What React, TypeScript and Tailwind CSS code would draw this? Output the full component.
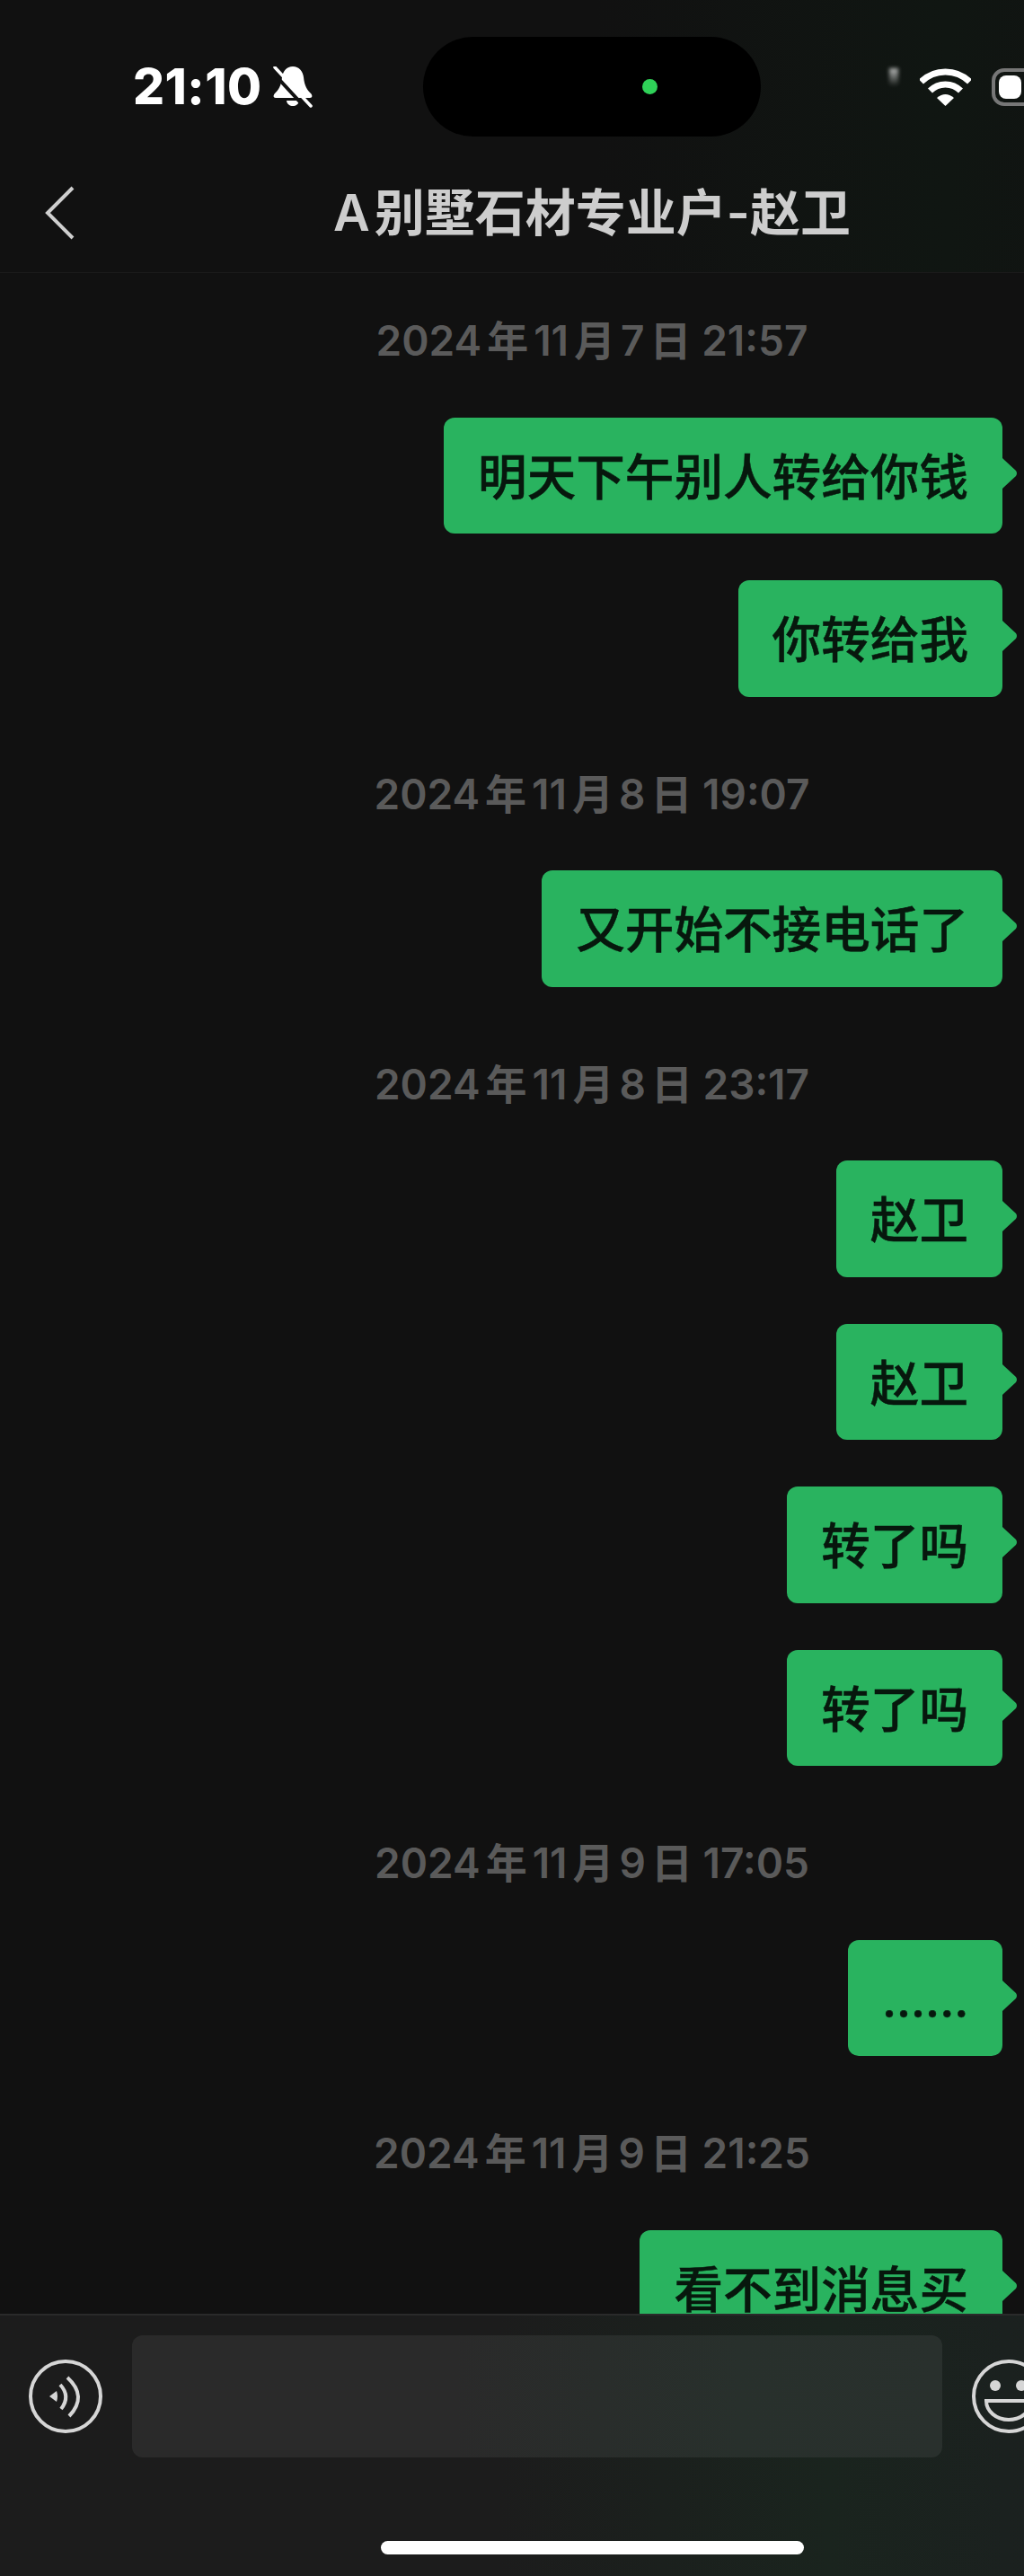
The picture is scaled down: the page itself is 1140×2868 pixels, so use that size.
const groups = [
  { date: ['2024', '11', '7', '21:57'], messages: ['明天下午别人转给你钱', '你转给我'] },
  { date: ['2024', '11', '8', '19:07'], messages: ['又开始不接电话了'] },
  { date: ['2024', '11', '8', '23:17'], messages: ['赵卫', '赵卫', '转了吗', '转了吗'] },
  { date: ['2024', '11', '9', '17:05'], messages: ['......'] },
  { date: ['2024', '11', '9', '21:25'], messages: ['看不到消息买'] },
];

function Bubble({ text }: { text: string }) {
  return (
    <div className="relative flex h-[129.5px] shrink-0 items-center rounded-[12px] bg-[#29b35f] px-[38px] pt-[4px] text-[54.6px] font-medium text-[#07170d] [-webkit-text-stroke:0.5px_#07170d]">
      <span className={`whitespace-nowrap leading-none ${text === '......' ? 'tracking-[-0.5px]' : ''}`}>{text}</span>
      <svg className="absolute left-full top-[45px] h-[34px] w-[17px]" viewBox="0 0 17 34" aria-hidden="true">
        <path d="M0 0 L2 2 L15 14 Q17 17 15 20 L2 32 L0 34 Z" fill="#29b35f" />
      </svg>
    </div>
  );
}

function Stamp({ date }: { date: string[] }) {
  const [year, month, day, time] = date;
  return (
    <div className="flex h-[60px] shrink-0 items-center justify-center self-stretch whitespace-pre pl-[202px] pt-[1px] text-[46px] font-semibold text-[#5a5a5a]">
      {year}
      <span className="mx-[6px]">年</span>
      {month}
      <span className="mx-[6px]">月</span>
      {day}
      <span className="ml-[6px]">日</span>
      {` ${time}`}
    </div>
  );
}

function MuteBell() {
  return (
    <svg className="ml-[12px] h-[46px] w-[44px]" viewBox="0 0 44 46" aria-hidden="true">
      <path
        d="M22 0 C15 0 11 5 10 12 C9 22 6 26 2 30 C0 32 0 35 3 35 H41 C44 35 44 32 42 30 C38 26 35 22 34 12 C33 5 29 0 22 0Z"
        fill="#fff"
      />
      <path d="M15 38 H29 C28 46 16 46 15 38Z" fill="#fff" />
      <path d="M-2 5 L36 46" stroke="#111" strokeWidth="4" />
      <path d="M2 1 L42 44" stroke="#fff" strokeWidth="3.5" strokeLinecap="round" />
    </svg>
  );
}

function Wifi() {
  return (
    <svg className="ml-[24px] h-[42px] w-[57px] shrink-0" viewBox="0 0 57 42" aria-hidden="true">
      <path d="M1.5 15 A38.5 38.5 0 0 1 55.5 15" fill="none" stroke="#fff" strokeWidth="7" />
      <path d="M11.5 25 A24 24 0 0 1 45.5 25" fill="none" stroke="#fff" strokeWidth="7" />
      <path d="M19 33 Q28.5 25 38 33 L28.5 42Z" fill="#fff" />
    </svg>
  );
}

function VoiceIcon() {
  return (
    <svg className="h-[82px] w-[82px] shrink-0" viewBox="0 0 82 82" fill="none" stroke="#d6d6d6" strokeWidth="4" aria-hidden="true">
      <circle cx="41" cy="41" r="39" />
      <path d="M23 41 L31 35 Q33 41 31 47Z" fill="#d6d6d6" stroke="none" />
      <path d="M35 28 Q47 41 36 55" />
      <path d="M43 20 Q66 41 45 63" />
    </svg>
  );
}

function EmojiIcon() {
  return (
    <svg className="ml-[33px] h-[82px] w-[82px] shrink-0" viewBox="0 0 82 82" fill="none" stroke="#d6d6d6" strokeWidth="4" aria-hidden="true">
      <circle cx="41" cy="41" r="39" />
      <circle cx="26" cy="29" r="6" fill="#d6d6d6" stroke="none" />
      <circle cx="55" cy="29" r="6" fill="#d6d6d6" stroke="none" />
      <path d="M16 46 H66 A25 21 0 0 1 16 46Z" />
    </svg>
  );
}

export default function App() {
  return (
    <div className="h-[2868px] w-[1140px] overflow-hidden bg-[#111111] font-['Inter','Noto_Sans_CJK_SC',sans-serif]">
      <div className="flex h-full w-[1318px] flex-col">
        <header className="h-[304px] shrink-0 border-b border-[#1b1b1b] bg-[linear-gradient(90deg,#111111_0%,#111111_50%,#101612_80%,#111111_100%)]">
          <div className="flex h-[111px] translate-y-[41px] items-center">
            <div className="flex w-[471px] items-center pl-[148px]">
              <span className="text-[55px] font-extrabold leading-none tracking-[0.5px] text-white">21:10</span>
              <MuteBell />
            </div>
            <div className="flex h-[111px] w-[376px] items-center justify-end rounded-[56px] bg-black pr-[115px]">
              <span className="h-[17px] w-[17px] rounded-full bg-[#2fd158]" />
            </div>
            <div className="flex items-center pl-[143px]">
              <span className="h-[20px] w-[10px] self-start bg-gradient-to-b from-white/70 to-transparent blur-[2px]" />
              <Wifi />
              <div className="ml-[23px] h-[42px] w-[92px] shrink-0 rounded-[14px] border-[4px] border-[#777777] p-[4px]">
                <div className="h-full w-[25px] rounded-[8px] bg-white" />
              </div>
            </div>
          </div>
          <div className="mt-[60px] grid h-[131px] grid-cols-[1fr_auto_1fr] items-center">
            <svg className="ml-[50px] h-[60px] w-[34px]" viewBox="0 0 34 60" fill="none" stroke="#cfcfcf" strokeWidth="4" aria-hidden="true">
              <path d="M31 2 L3 30 L31 58" />
            </svg>
            <h1 className="whitespace-nowrap text-[56px] font-semibold leading-none text-[#cdcdcd]">
              A<span className="ml-[5px]">别墅石材专业户-赵卫</span>
            </h1>
          </div>
        </header>

        <main className="flex min-h-0 flex-1 flex-col items-end gap-[78px] overflow-hidden pr-[202px] pt-[45px]">
          {groups.map((group) => (
            <section key={group.date.join('-')} className="flex shrink-0 flex-col items-end self-stretch">
              <Stamp date={group.date} />
              <div className="mt-[55.5px] flex flex-col items-end gap-[52px]">
                {group.messages.map((text, index) => (
                  <Bubble key={index} text={text} />
                ))}
              </div>
            </section>
          ))}
        </main>

        <footer className="h-[292px] shrink-0 border-t-2 border-[#2a2a2a] bg-[linear-gradient(90deg,#1c1c1c_0%,#1c1c1c_42%,#1a241e_70%,#1b211f_85%,#1c1f1e_100%)]">
          <div className="flex h-[136px] translate-y-[22px] items-center pl-[32px]">
            <VoiceIcon />
            <div className="ml-[33px] h-[136px] w-[902px] shrink-0 rounded-[12px] bg-[linear-gradient(90deg,#2a2a2a_0%,#2a2a2a_40%,#28302c_75%,#29302d_100%)]" />
            <EmojiIcon />
          </div>
          <div className="mx-auto mt-[115px] h-[15px] w-[471px] rounded-full bg-white" />
        </footer>
      </div>
    </div>
  );
}
